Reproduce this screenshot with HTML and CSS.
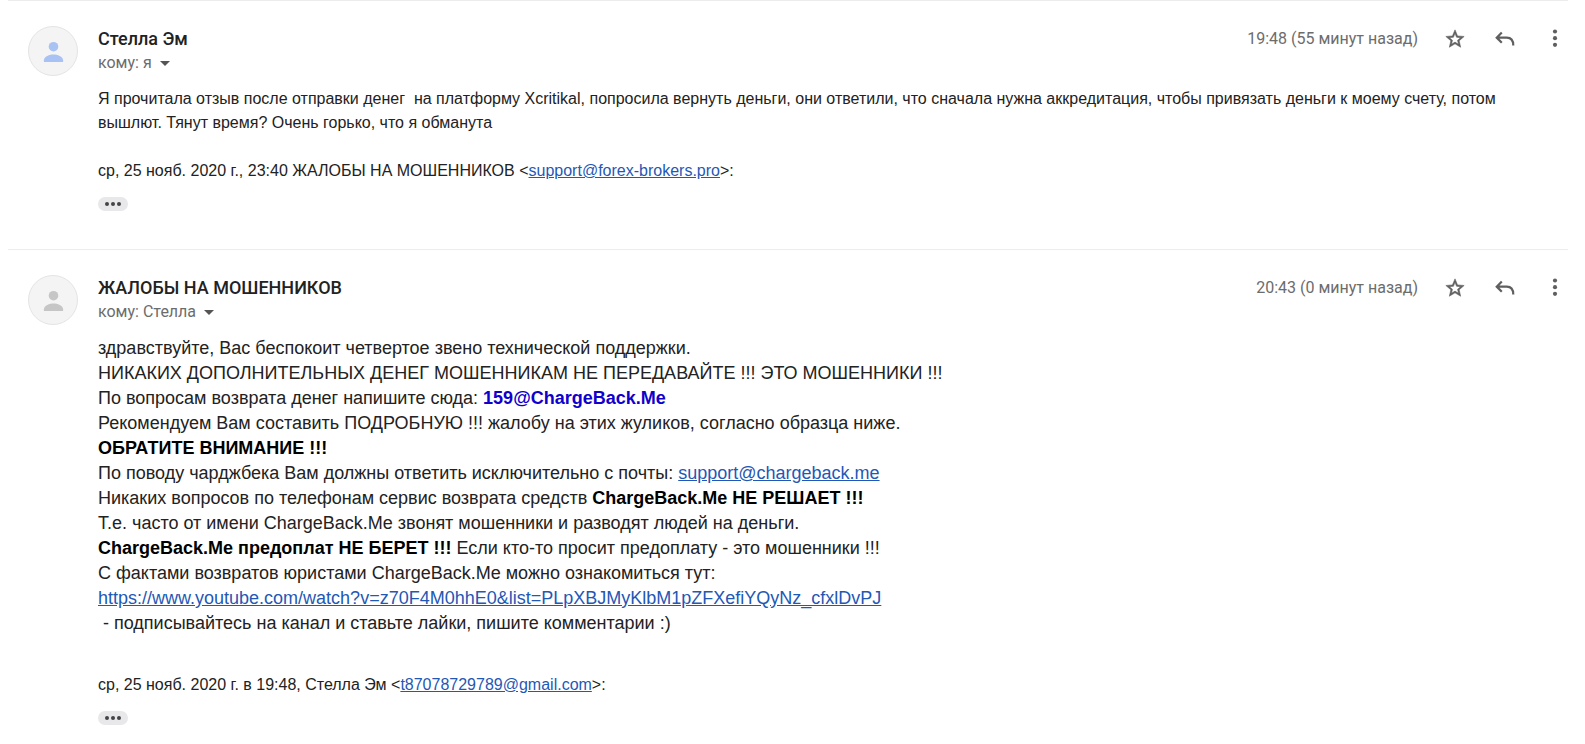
FILE: index.html
```
<!DOCTYPE html>
<html lang="ru">
<head>
  <meta charset="UTF-8" />
  <meta name="viewport" content="width=device-width, initial-scale=1.0" />
  <title>ЖАЛОБЫ НА МОШЕННИКОВ</title>
  <link rel="stylesheet" href="styles.css">
</head>
<body>
  <!-- Общие иконки -->
  <svg class="sprite" aria-hidden="true">
    <symbol id="icon-person" viewBox="0 0 24 24">
      <circle cx="12" cy="7" r="5" />
      <path d="M2 23v-2c0-4 6-6 10-6s10 2 10 6v2z" />
    </symbol>
    <symbol id="icon-star" viewBox="0 0 24 24">
      <path d="M22 9.24l-7.19-.62L12 2 9.19 8.63 2 9.24l5.46 4.73L5.82 21 12 17.27 18.18 21l-1.63-7.03L22 9.24zM12 15.4l-3.76 2.27 1-4.28-3.32-2.88 4.38-.38L12 6.1l1.71 4.04 4.38.38-3.32 2.88 1 4.28L12 15.4z" stroke="currentColor" stroke-width="0.6" />
    </symbol>
    <symbol id="icon-reply" viewBox="0 0 24 24">
      <path d="M8.5 5L3 10.500l5.500 5.500M3 10.500h11c4.500 0 7 2.500 7 8.500" fill="none" stroke="currentColor" stroke-width="2.400" />
    </symbol>
    <symbol id="icon-more" viewBox="0 0 24 24">
      <circle cx="12" cy="3" r="2.500" />
      <circle cx="12" cy="11" r="2.500" />
      <circle cx="12" cy="19" r="2.500" />
    </symbol>
  </svg>

  <main class="thread">
    <article class="message">
      <div class="avatar avatar-blue">
        <svg class="avatar-icon" aria-hidden="true"><use href="#icon-person" /></svg>
      </div>
      <div class="content">
        <header class="message-header">
          <div class="sender">
            <h2 class="sender-name">Стелла Эм</h2>
            <button class="recipient" type="button">кому: я <span class="caret"></span></button>
          </div>
          <div class="actions">
            <time class="time">19:48 (55 минут назад)</time>
            <button class="icon-btn" type="button" aria-label="Пометить"><svg class="icon"><use href="#icon-star" /></svg></button>
            <button class="icon-btn" type="button" aria-label="Ответить"><svg class="icon"><use href="#icon-reply" /></svg></button>
            <button class="icon-btn" type="button" aria-label="Ещё"><svg class="icon icon-small"><use href="#icon-more" /></svg></button>
          </div>
        </header>
        <div class="text">
          <p>Я прочитала отзыв после отправки денег&nbsp; на платформу Xcritikal, попросила вернуть деньги, они ответили, что сначала нужна аккредитация, чтобы привязать деньги к моему счету, потом вышлют. Тянут время? Очень горько, что я обманута</p>
        </div>
        <p class="quote">ср, 25 нояб. 2020 г., 23:40 ЖАЛОБЫ НА МОШЕННИКОВ &lt;<a href="mailto:support@forex-brokers.pro">support@forex-brokers.pro</a>&gt;:</p>
        <button class="expand" type="button" aria-label="Показать цитату"><span></span><span></span><span></span></button>
      </div>
    </article>

    <article class="message">
      <div class="avatar">
        <svg class="avatar-icon" aria-hidden="true"><use href="#icon-person" /></svg>
      </div>
      <div class="content">
        <header class="message-header">
          <div class="sender">
            <h2 class="sender-name">ЖАЛОБЫ НА МОШЕННИКОВ</h2>
            <button class="recipient" type="button">кому: Стелла <span class="caret"></span></button>
          </div>
          <div class="actions">
            <time class="time">20:43 (0 минут назад)</time>
            <button class="icon-btn" type="button" aria-label="Пометить"><svg class="icon"><use href="#icon-star" /></svg></button>
            <button class="icon-btn" type="button" aria-label="Ответить"><svg class="icon"><use href="#icon-reply" /></svg></button>
            <button class="icon-btn" type="button" aria-label="Ещё"><svg class="icon icon-small"><use href="#icon-more" /></svg></button>
          </div>
        </header>
        <div class="text text-large">
          <p>здравствуйте, Вас беспокоит четвертое звено технической поддержки.</p>
          <p>НИКАКИХ ДОПОЛНИТЕЛЬНЫХ ДЕНЕГ МОШЕННИКАМ НЕ ПЕРЕДАВАЙТЕ !!! ЭТО МОШЕННИКИ !!!</p>
          <p>По вопросам возврата денег напишите сюда: <strong class="contact">159@ChargeBack.Me</strong></p>
          <p>Рекомендуем Вам составить ПОДРОБНУЮ !!! жалобу на этих жуликов, согласно образца ниже.</p>
          <p><strong>ОБРАТИТЕ ВНИМАНИЕ !!!</strong></p>
          <p>По поводу чарджбека Вам должны ответить исключительно с почты: <a href="mailto:support@chargeback.me">support@chargeback.me</a></p>
          <p>Никаких вопросов по телефонам сервис возврата средств <strong>ChargeBack.Me НЕ РЕШАЕТ !!!</strong></p>
          <p>Т.е. часто от имени ChargeBack.Me звонят мошенники и разводят людей на деньги.</p>
          <p><strong>ChargeBack.Me предоплат НЕ БЕРЕТ !!!</strong> Если кто-то просит предоплату - это мошенники !!!</p>
          <p>С фактами возвратов юристами ChargeBack.Me можно ознакомиться тут:</p>
          <p><a href="https://www.youtube.com/watch?v=z70F4M0hhE0&amp;list=PLpXBJMyKlbM1pZFXefiYQyNz_cfxlDvPJ">https://www.youtube.com/watch?v=z70F4M0hhE0&amp;list=PLpXBJMyKlbM1pZFXefiYQyNz_cfxlDvPJ</a></p>
          <p>&nbsp;- подписывайтесь на канал и ставьте лайки, пишите комментарии :)</p>
        </div>
        <p class="quote quote-spaced">ср, 25 нояб. 2020 г. в 19:48, Стелла Эм &lt;<a href="mailto:t87078729789@gmail.com">t87078729789@gmail.com</a>&gt;:</p>
        <button class="expand" type="button" aria-label="Показать цитату"><span></span><span></span><span></span></button>
      </div>
    </article>
  </main>
</body>
</html>
```
FILE: styles.css
```
* {
  box-sizing: border-box;
  margin: 0;
  padding: 0;
}

body {
  font-family: "Liberation Sans", Arial, sans-serif;
  font-size: 16px;
  line-height: 24px;
  color: #222;
  background-color: #fff;
}

button {
  font: inherit;
  color: inherit;
  background: none;
  border: none;
  cursor: pointer;
}

a {
  color: #1f58b5;
}

strong {
  color: #000;
}

.sprite {
  display: none;
}

.thread {
  margin: 0 17px 0 8px;
}

/* Письмо */
.message {
  display: flex;
  gap: 20px;
  padding: 25px 0 38px 20px;
  border-top: 1px solid #ececec;
}

.message:last-child {
  padding-bottom: 16px;
}

.avatar {
  display: flex;
  flex: none;
  align-items: center;
  justify-content: center;
  width: 50px;
  height: 50px;
  border: 1px solid #e4e4e4;
  border-radius: 50%;
  background-color: #f4f4f4;
  color: #c6c6c6;
}

.avatar-blue {
  color: #a8c2f4;
}

.avatar-icon {
  width: 23px;
  height: 23px;
  fill: currentColor;
}

.content {
  flex: 1;
  min-width: 0;
}

/* Шапка письма */
.message-header {
  display: flex;
  justify-content: space-between;
  align-items: flex-start;
  font-family: Roboto, Arial, sans-serif;
}

.sender-name {
  font-size: 18px;
  font-weight: 500;
  line-height: 26px;
}

.recipient {
  display: flex;
  align-items: center;
  gap: 8px;
  font-size: 16px;
  line-height: 22px;
  color: #6c6c6c;
}

.caret {
  border: 5px solid transparent;
  border-top-color: #555;
  border-bottom: none;
}

.actions {
  display: flex;
  align-items: center;
  height: 25px;
  padding-right: 3px;
  color: #5f5f5f;
}

.time {
  margin-right: 12px;
  font-size: 16px;
  color: #6c6c6c;
}

.icon-btn {
  display: flex;
  align-items: center;
  justify-content: center;
  width: 50px;
  height: 24px;
}

.icon-btn:last-child {
  justify-content: flex-end;
  width: 35px;
}

.icon {
  width: 22px;
  height: 22px;
  fill: currentColor;
}

.icon-small {
  width: 20px;
  height: 20px;
}

/* Текст письма */
.text {
  padding: 13px 40px 0 0;
}

.text-large {
  font-size: 18px;
  line-height: 25px;
}

.contact {
  color: #1000cc;
}

.quote {
  margin-top: 24px;
}

.quote-spaced {
  margin-top: 37px;
}

/* Кнопка скрытой цитаты */
.expand {
  display: flex;
  align-items: center;
  justify-content: center;
  gap: 2px;
  width: 30px;
  height: 14px;
  margin-top: 14px;
  border-radius: 7px;
  background-color: #e8e8ea;
}

.expand span {
  width: 4px;
  height: 4px;
  border-radius: 50%;
  background-color: #444;
}
```
